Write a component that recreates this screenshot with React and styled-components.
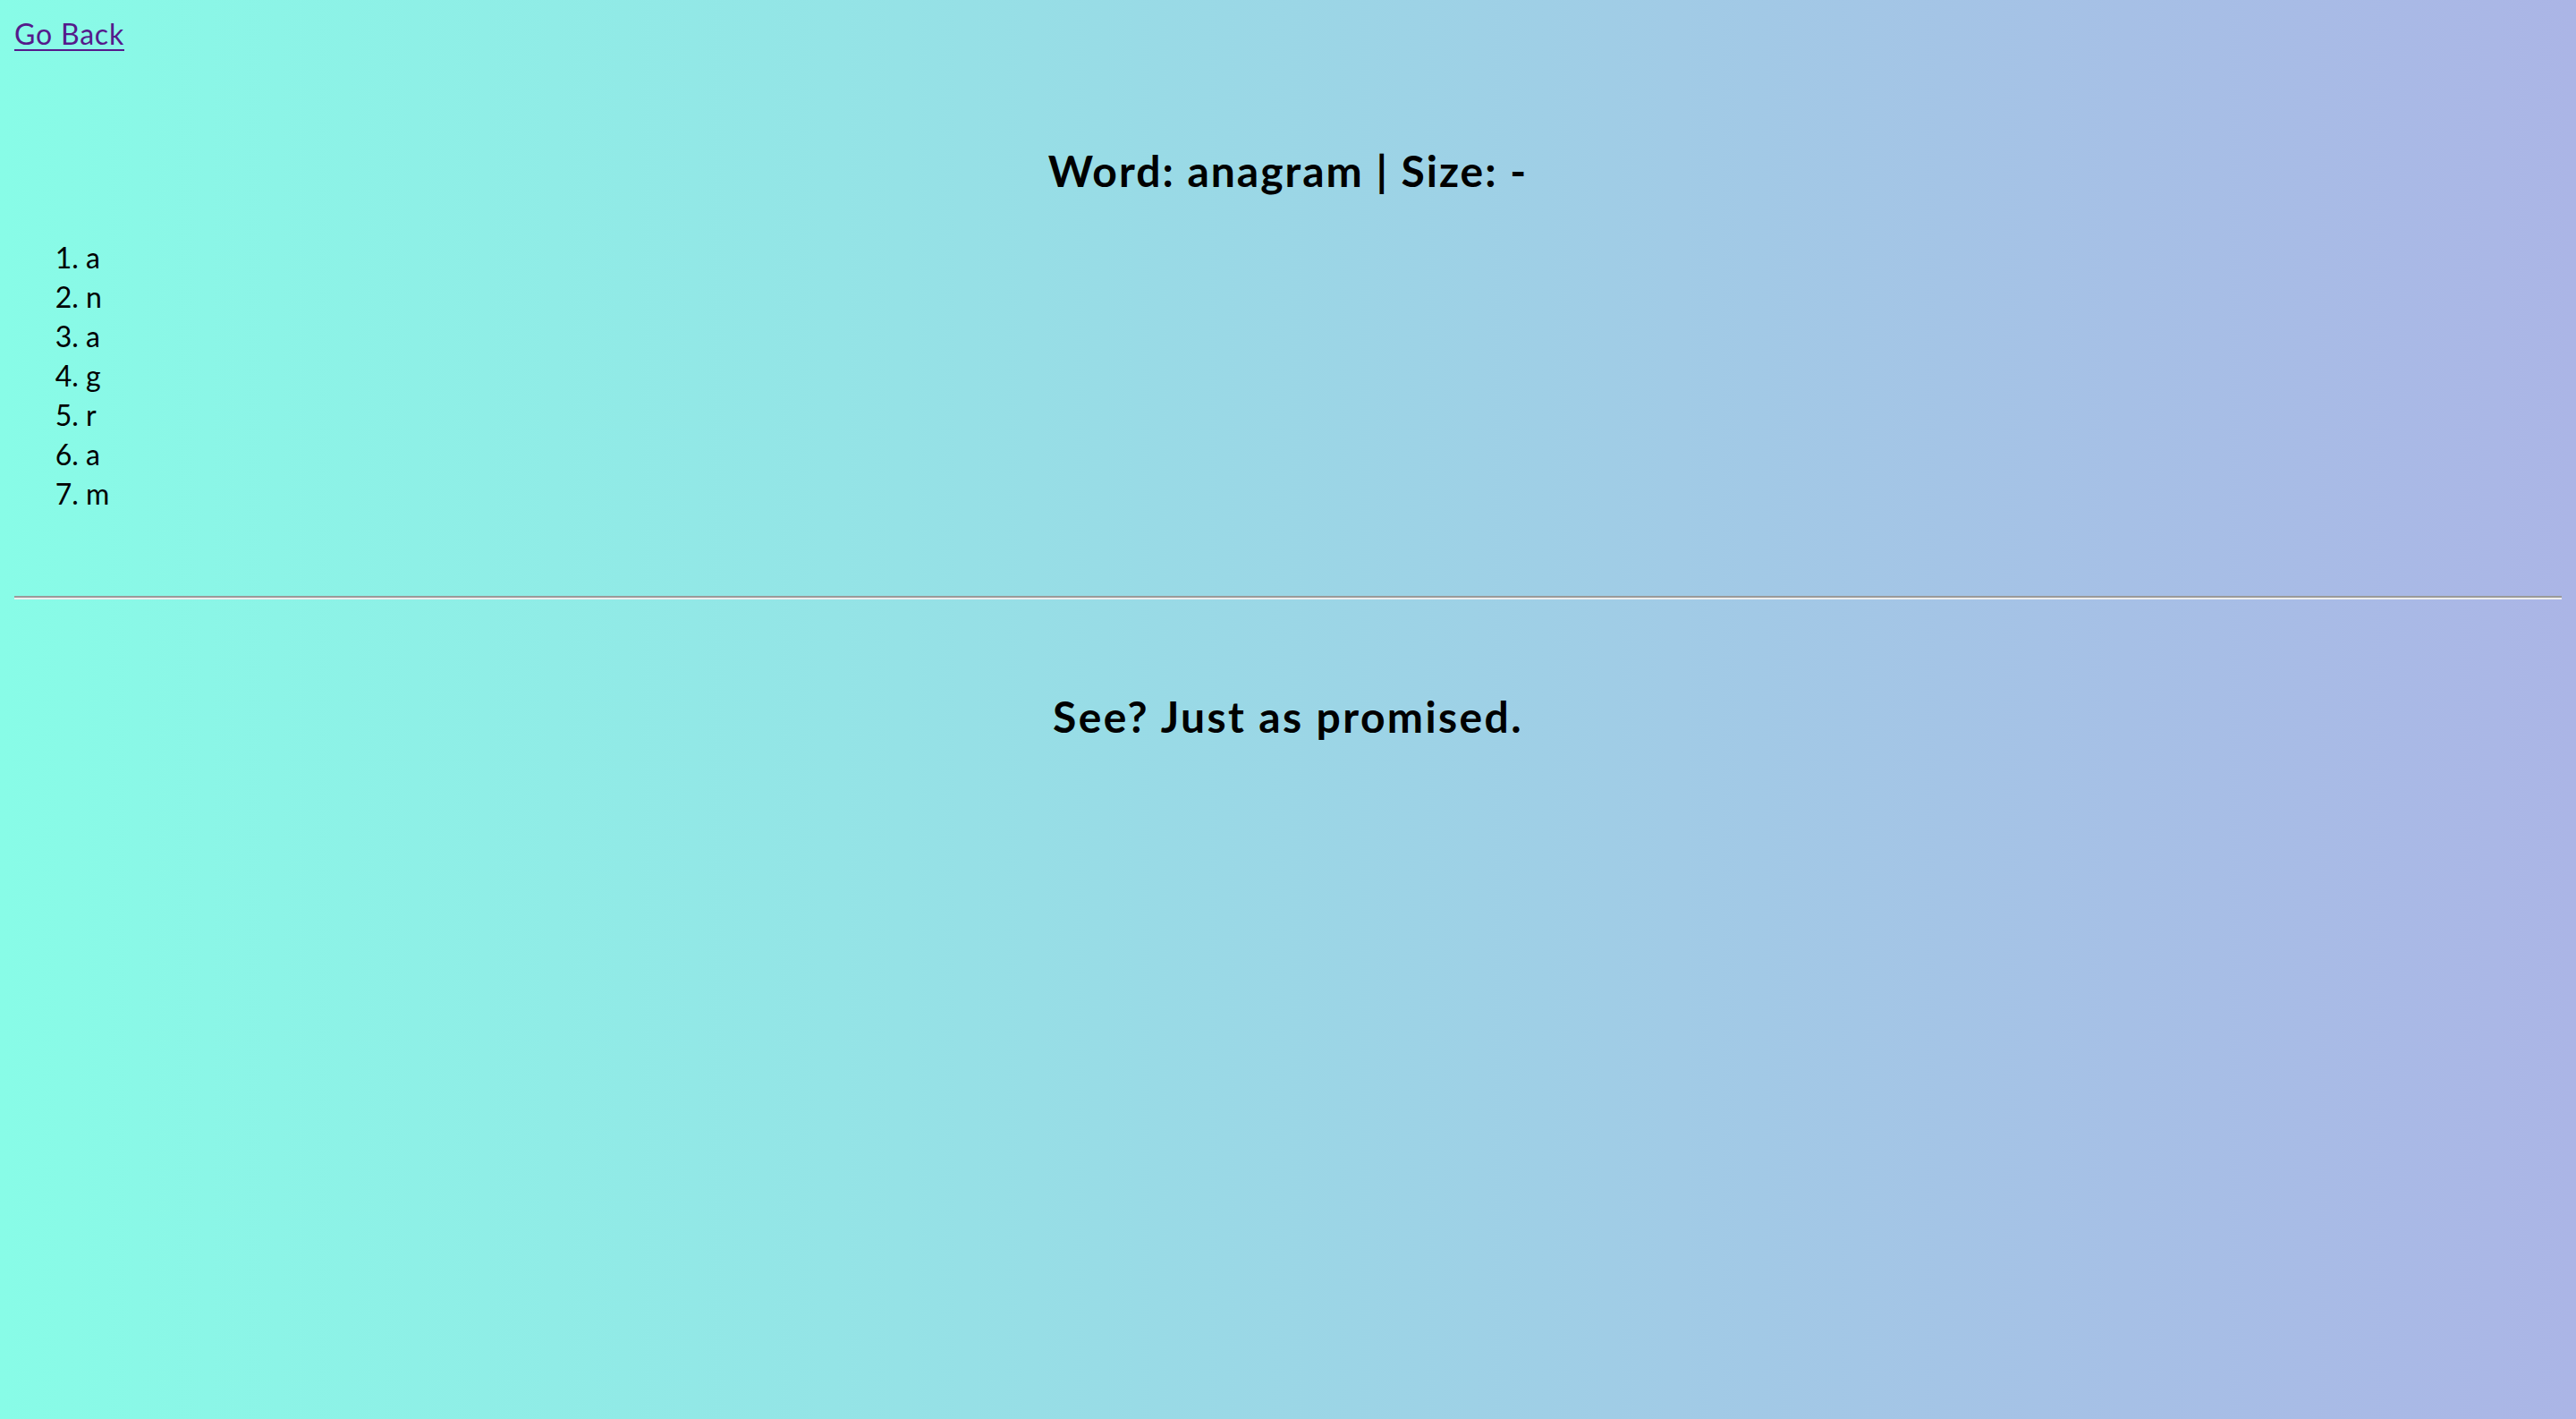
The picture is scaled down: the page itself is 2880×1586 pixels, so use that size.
import React from "react";
import styled, { createGlobalStyle } from "styled-components";

const GlobalStyle = createGlobalStyle`
  html, body {
    margin: 0;
    min-height: 100%;
  }
  body {
    padding: 16px;
    box-sizing: border-box;
    min-height: 100vh;
    font-family: "Lato", "Noto Sans", sans-serif;
    font-size: 32px;
    line-height: 44px;
    color: #000;
    background: linear-gradient(to right, #88fce7 0%, #95e2e6 35%, #a1cbe6 65%, #abb5e6 100%);
    background-attachment: fixed;
  }
`;

const Page = styled.div`
  display: flex;
  flex-direction: column;
`;

const BackLink = styled.a`
  align-self: flex-start;
  color: #551a8b;
  letter-spacing: 0.8px;
  text-decoration: underline;
  text-decoration-thickness: 2px;
  text-underline-offset: 5px;
  cursor: pointer;
`;

const Title = styled.h2`
  margin: 98px 0 42px;
  font-size: 48px;
  line-height: 66px;
  font-weight: 700;
  letter-spacing: ${(p) => p.$spacing || "2px"};
  text-align: center;
`;

const LetterList = styled.ol`
  margin: 0 0 92px;
  padding-left: 80px;
`;

const Letter = styled.li`
  line-height: 44px;
`;

const Divider = styled.hr`
  margin: 0;
  height: 0;
  border: none;
  border-top: 2px solid #9a9a9a;
  border-bottom: 2px solid #eeeeee;
`;

const word = "anagram";

const App = () => {
  return (
    <>
      <GlobalStyle />
      <Page>
        <BackLink href="#">Go Back</BackLink>
        <Title>Word: {word} | Size: -</Title>
        <LetterList>
          {word.split("").map((ch, i) => (
            <Letter key={i}>{ch}</Letter>
          ))}
        </LetterList>
        <Divider />
        <Title $spacing="2.4px">See? Just as promised.</Title>
      </Page>
    </>
  );
};

export default App;
